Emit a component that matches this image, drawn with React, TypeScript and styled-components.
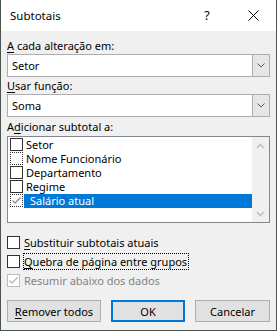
import React from "react";
import styled, { createGlobalStyle } from "styled-components";

const Global = createGlobalStyle`
  html, body { margin: 0; padding: 0; background: #ffffff; }
  body {
    font-family: "Noto Sans", "Open Sans", sans-serif;
    font-size: 11px;
    color: #000000;
  }
  * { box-sizing: border-box; }
`;

const Window = styled.div`
  width: 277px;
  height: 331px;
  border: 1px solid #4b5550;
  border-top: none;
  background: #f0f0f0;
  display: flex;
  flex-direction: column;
`;

const TitleBar = styled.div`
  height: 31px;
  flex: none;
  background: #ffffff;
  display: flex;
  align-items: center;
  padding-left: 9px;
`;

const Title = styled.span`
  flex: 1;
  font-size: 11.5px;
`;

const TitleButton = styled.div`
  width: 46px;
  height: 31px;
  display: flex;
  align-items: center;
  justify-content: center;
  font-size: 12.5px;
`;

const Body = styled.div`
  flex: 1;
  padding: 0 6px;
  display: flex;
  flex-direction: column;
`;

const FieldLabel = styled.div<{ $gap: number }>`
  height: 16px;
  line-height: 16px;
  margin-top: ${(p) => p.$gap}px;
  white-space: nowrap;
`;

const Key = styled.span`
  text-decoration: underline;
  text-underline-offset: 2px;
  text-decoration-thickness: 1px;
`;

const Combo = styled.div`
  height: 23px;
  border: 1px solid #adadad;
  background: #ffffff;
  display: flex;
`;

const ComboText = styled.div`
  flex: 1;
  padding-left: 4px;
  line-height: 21px;
`;

const ComboButton = styled.div`
  width: 17px;
  background: #e6e6e6;
  border-left: 1px solid #adadad;
  display: flex;
  align-items: center;
  justify-content: center;
`;

const ListBox = styled.div`
  margin-top: 1px;
  height: 87px;
  border: 1px solid #828790;
  background: #ffffff;
  display: flex;
`;

const Items = styled.div`
  flex: 1;
  padding: 1px 0 0 2px;
  display: flex;
  flex-direction: column;
`;

const Item = styled.div`
  height: 14px;
  display: flex;
  align-items: flex-start;
`;

const ItemLabel = styled.span<{ $selected?: boolean }>`
  margin-left: 1px;
  height: 14px;
  line-height: 14px;
  padding-left: ${(p) => (p.$selected ? 6 : 2)}px;
  white-space: nowrap;
  ${(p) =>
    p.$selected
      ? `flex: 1; background: #0078d7; color: #ffffff;`
      : ``}
`;

const ScrollBar = styled.div`
  width: 17px;
  background: #f0f0f0;
  display: flex;
  flex-direction: column;
  justify-content: space-between;
`;

const ScrollArrow = styled.div`
  height: 17px;
  display: flex;
  align-items: center;
  justify-content: center;
`;

const Box = styled.span<{ $dotted?: boolean; $disabled?: boolean }>`
  flex: none;
  width: 13px;
  height: 13px;
  background: #ffffff;
  border: 1px ${(p) => (p.$dotted ? "dotted" : "solid")}
    ${(p) => (p.$disabled ? "#bcbcbc" : "#333333")};
  display: flex;
  align-items: center;
  justify-content: center;
`;

const Options = styled.div`
  margin-top: 10px;
  display: flex;
  flex-direction: column;
`;

const OptionRow = styled.div`
  height: 19px;
  display: flex;
  align-items: center;
`;

const OptionLabel = styled.span<{ $focus?: boolean; $disabled?: boolean }>`
  margin-left: 3px;
  padding-right: 1px;
  line-height: 15px;
  border: 1px dotted ${(p) => (p.$focus ? "#000000" : "transparent")};
  color: ${(p) => (p.$disabled ? "#838383" : "#000000")};
  white-space: nowrap;
`;

const Buttons = styled.div`
  margin-top: 10px;
  display: flex;
  gap: 10px;
`;

const Button = styled.div<{ $w: number; $default?: boolean }>`
  width: ${(p) => p.$w}px;
  height: 22px;
  background: #e1e1e1;
  border: ${(p) => (p.$default ? "2px solid #0078d7" : "1px solid #adadad")};
  display: flex;
  align-items: center;
  justify-content: center;
  white-space: nowrap;
`;

const Chevron = ({ up, color }: { up?: boolean; color: string }) => (
  <svg width="9" height="6" viewBox="0 0 9 6">
    <polyline
      points={up ? "1,5 4.5,1.5 8,5" : "1,1 4.5,4.5 8,1"}
      fill="none"
      stroke={color}
      strokeWidth={1.6}
    />
  </svg>
);

const SmallChevron = () => (
  <svg width="8" height="5" viewBox="0 0 8 5">
    <polyline points="0.5,0.5 4,4 7.5,0.5" fill="none" stroke="#5a5a5a" strokeWidth="1" />
  </svg>
);

const Check = ({ color }: { color: string }) => (
  <svg width="11" height="11" viewBox="0 0 11 11">
    <polyline points="1.5,5.5 4,8 9.5,2.5" fill="none" stroke={color} strokeWidth="1.3" />
  </svg>
);

const Close = () => (
  <svg width="11" height="11" viewBox="0 0 11 11">
    <line x1="0.5" y1="0.5" x2="10.5" y2="10.5" stroke="#000" strokeWidth="1" />
    <line x1="10.5" y1="0.5" x2="0.5" y2="10.5" stroke="#000" strokeWidth="1" />
  </svg>
);

const items = [
  { label: "Setor" },
  { label: "Nome Funcionário", dotted: true },
  { label: "Departamento" },
  { label: "Regime" },
  { label: "Salário atual", dotted: true, checked: true, selected: true },
];

export default function App() {
  return (
    <>
      <Global />
      <Window>
        <TitleBar>
          <Title>Subtotais</Title>
          <TitleButton>?</TitleButton>
          <TitleButton>
            <Close />
          </TitleButton>
        </TitleBar>
        <Body>
          <FieldLabel $gap={7}>
            <Key>A</Key> cada alteração em:
          </FieldLabel>
          <Combo>
            <ComboText>Setor</ComboText>
            <ComboButton>
              <SmallChevron />
            </ComboButton>
          </Combo>
          <FieldLabel $gap={1}>
            <Key>U</Key>sar função:
          </FieldLabel>
          <Combo>
            <ComboText>Soma</ComboText>
            <ComboButton>
              <SmallChevron />
            </ComboButton>
          </Combo>
          <FieldLabel $gap={2}>
            A<Key>d</Key>icionar subtotal a:
          </FieldLabel>
          <ListBox>
            <Items>
              {items.map((it) => (
                <Item key={it.label}>
                  <Box $dotted={it.dotted}>
                    {it.checked && <Check color="#8a8a8a" />}
                  </Box>
                  <ItemLabel $selected={it.selected}>{it.label}</ItemLabel>
                </Item>
              ))}
            </Items>
            <ScrollBar>
              <ScrollArrow>
                <Chevron up color="#c2c2c2" />
              </ScrollArrow>
              <ScrollArrow>
                <Chevron color="#c2c2c2" />
              </ScrollArrow>
            </ScrollBar>
          </ListBox>
          <Options>
            <OptionRow>
              <Box />
              <OptionLabel>
                <Key>S</Key>ubstituir subtotais atuais
              </OptionLabel>
            </OptionRow>
            <OptionRow>
              <Box />
              <OptionLabel $focus>
                <Key>Q</Key>uebra de página entre grupos
              </OptionLabel>
            </OptionRow>
            <OptionRow>
              <Box $disabled>
                <Check color="#b5b5b5" />
              </Box>
              <OptionLabel $disabled>Resumir abaixo dos dados</OptionLabel>
            </OptionRow>
          </Options>
          <Buttons>
            <Button $w={94}>
              <Key>R</Key>emover todos
            </Button>
            <Button $w={74} $default>
              OK
            </Button>
            <Button $w={75}>Cancelar</Button>
          </Buttons>
        </Body>
      </Window>
    </>
  );
}
